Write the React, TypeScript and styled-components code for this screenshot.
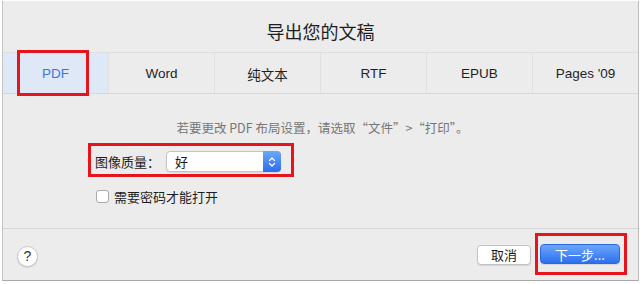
import React from "react";
import styled, { createGlobalStyle } from "styled-components";

const Global = createGlobalStyle`
  html, body { margin: 0; padding: 0; background: #ffffff; }
  body { font-family: "Liberation Sans", "Noto Sans CJK SC", sans-serif; }
  * { box-sizing: border-box; }
`;

const Page = styled.div`
  width: 644px;
  height: 284px;
  background: #ffffff;
  overflow: hidden;
`;

const Dialog = styled.div`
  margin-left: 2px;
  margin-top: 1px;
  width: 637px;
  height: 280px;
  background: #ececec;
  border-left: 1px solid #c4c4c4;
  border-right: 1px solid #bcbcbc;
  border-bottom: 1px solid #a8a8a8;
  display: flex;
  flex-direction: column;
`;

const Title = styled.div`
  height: 51px;
  padding-top: 8px;
  display: flex;
  align-items: center;
  justify-content: center;
  font-family: "Noto Sans CJK SC", sans-serif;
  font-size: 18px;
  color: #1e1e1e;
`;

const TabBar = styled.div`
  display: flex;
  height: 42px;
  border-top: 1px solid #dedede;
  border-bottom: 1px solid #d8d8d8;
`;

const Tab = styled.div<{ $active?: boolean; $last?: boolean }>`
  position: relative;
  flex: 1;
  display: flex;
  align-items: center;
  justify-content: center;
  padding-top: 1px;
  font-family: "Liberation Sans", "Noto Sans CJK SC", sans-serif;
  font-size: 13.5px;
  color: ${(p) => (p.$active ? "#3d78d6" : "#1f1f1f")};
  background: ${(p) => (p.$active ? "#dfe8f6" : "transparent")};
  border-right: ${(p) => (p.$last ? "none" : "1px solid #e0e0e0")};
`;

const TabMark = styled.div`
  position: absolute;
  top: -3px;
  bottom: -3px;
  left: 14px;
  right: 19px;
  border: 3px solid #e8141c;
  pointer-events: none;
`;

const Body = styled.div`
  flex: 1;
  display: flex;
  flex-direction: column;
  padding-top: 26px;
  border-bottom: 1px solid #d6d6d6;
`;

const Info = styled.div`
  text-align: center;
  font-family: "Noto Sans CJK SC", sans-serif;
  font-size: 12.5px;
  line-height: 16px;
  color: #777777;
  padding-left: 4px;
`;

const FormHighlight = styled.div`
  align-self: flex-start;
  margin-top: 7px;
  margin-left: 85px;
  width: 206px;
  height: 34px;
  border: 3px solid #e8141c;
  display: flex;
  align-items: center;
  padding: 3px 9px 0 4px;
`;

const Label = styled.span`
  font-family: "Noto Sans CJK SC", sans-serif;
  font-size: 13px;
  color: #1e1e1e;
  width: 71px;
`;

const Select = styled.div`
  position: relative;
  width: 115px;
  height: 21px;
  background: #ffffff;
  border: 1px solid #c4c4c4;
  border-radius: 4px;
  box-shadow: 0 1px 1px rgba(0, 0, 0, 0.08);
  display: flex;
  align-items: center;
  padding-left: 8px;
  font-family: "Noto Sans CJK SC", sans-serif;
  font-size: 13px;
  color: #1a1a1a;
`;

const Stepper = styled.div`
  position: absolute;
  right: -1px;
  top: -1px;
  bottom: -1px;
  width: 18px;
  border-radius: 0 4px 4px 0;
  background: linear-gradient(#6aa8fb, #2c6cf0);
  display: flex;
  align-items: center;
  justify-content: center;
`;

const CheckRow = styled.div`
  display: flex;
  align-items: center;
  margin-top: 10px;
  margin-left: 93px;
  gap: 5px;
`;

const Checkbox = styled.div`
  width: 13px;
  height: 13px;
  background: #ffffff;
  border: 1px solid #a9a9a9;
  border-radius: 3px;
`;

const CheckLabel = styled.span`
  font-family: "Noto Sans CJK SC", sans-serif;
  font-size: 13px;
  color: #1e1e1e;
`;

const Footer = styled.div`
  height: 51px;
  display: flex;
  align-items: center;
  padding: 0 11px 0 14px;
`;

const Help = styled.div`
  width: 21px;
  height: 21px;
  border-radius: 50%;
  background: #ffffff;
  border: 1px solid #c6c6c6;
  box-shadow: 0 1px 1px rgba(0, 0, 0, 0.1);
  display: flex;
  align-items: center;
  justify-content: center;
  font-family: "Liberation Sans", sans-serif;
  font-size: 14px;
  color: #333;
  margin-top: 3px;
`;

const Spacer = styled.div`
  flex: 1;
`;

const Button = styled.div<{ $primary?: boolean }>`
  height: 20px;
  display: flex;
  align-items: center;
  justify-content: center;
  border-radius: 4px;
  font-family: "Noto Sans CJK SC", sans-serif;
  font-size: 13px;
  width: ${(p) => (p.$primary ? "80px" : "54px")};
  color: ${(p) => (p.$primary ? "#ffffff" : "#1a1a1a")};
  background: ${(p) =>
    p.$primary ? "linear-gradient(#6aa7fb, #2f6ff0)" : "#ffffff"};
  border: 1px solid ${(p) => (p.$primary ? "#2e68e0" : "#c3c3c3")};
  box-shadow: 0 1px 1px rgba(0, 0, 0, 0.1);
`;

const ButtonHighlight = styled.div`
  margin-left: 4px;
  margin-top: -1px;
  border: 3px solid #e8141c;
  padding: 8px 4px 8px 2px;
`;

const tabs = ["PDF", "Word", "纯文本", "RTF", "EPUB", "Pages '09"];

export default function App() {
  return (
    <Page>
      <Global />
      <Dialog>
        <Title>导出您的文稿</Title>
        <TabBar>
          {tabs.map((t, i) => (
            <Tab key={t} $active={i === 0} $last={i === tabs.length - 1}>
              {t}
              {i === 0 && <TabMark />}
            </Tab>
          ))}
        </TabBar>
        <Body>
          <Info>若要更改 PDF 布局设置，请选取“文件”&gt;“打印”。</Info>
          <FormHighlight>
            <Label>图像质量：</Label>
            <Select>
              好
              <Stepper>
                <svg width="8" height="12" viewBox="0 0 8 12" fill="none">
                  <path d="M1.5 4.5 L4 2 L6.5 4.5" stroke="#fff" strokeWidth="1.3" strokeLinecap="round" strokeLinejoin="round" />
                  <path d="M1.5 7.5 L4 10 L6.5 7.5" stroke="#fff" strokeWidth="1.3" strokeLinecap="round" strokeLinejoin="round" />
                </svg>
              </Stepper>
            </Select>
          </FormHighlight>
          <CheckRow>
            <Checkbox />
            <CheckLabel>需要密码才能打开</CheckLabel>
          </CheckRow>
        </Body>
        <Footer>
          <Help>?</Help>
          <Spacer />
          <Button>取消</Button>
          <ButtonHighlight>
            <Button $primary>下一步...</Button>
          </ButtonHighlight>
        </Footer>
      </Dialog>
    </Page>
  );
}
